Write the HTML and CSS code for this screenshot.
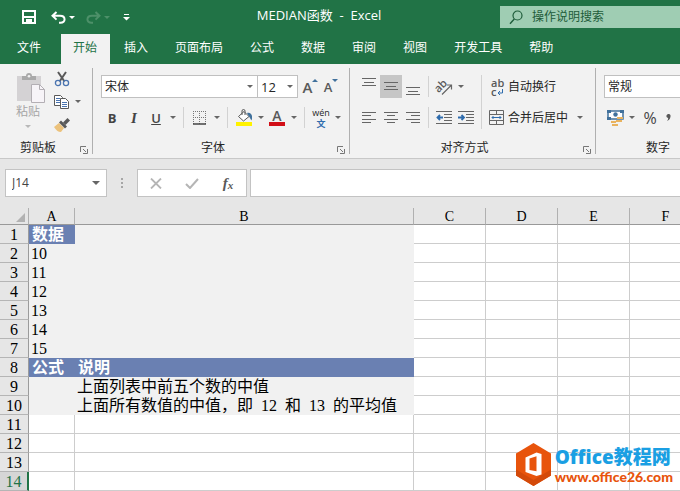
FILE: index.html
```html
<!DOCTYPE html>
<html lang="zh-CN">
<head>
  <meta charset="UTF-8" />
  <title>MEDIAN函数 - Excel</title>
  <link rel="stylesheet" href="styles.css">
</head>
<body>
  <header class="titlebar">
    <div class="quick-access">
      <button class="save" aria-label="保存">
        <svg width="14" height="14" viewBox="0 0 14 14"><path d="M0 0h14v14H0zM2 2v4h10V2zM2 8v4h2V9h6v3h2V8z" fill="#fff" fill-rule="evenodd"/><path d="M5 10.500h2V13H5z" fill="#fff"/></svg>
      </button>
      <button class="undo" aria-label="撤消">
        <svg width="15" height="13" viewBox="0 0 15 13"><path d="M5.500 1L1.500 4.800l4 3.800M2 4.800h7c6 0 6 7 .5 7H8" fill="none" stroke="#fff" stroke-width="2"/></svg>
      </button>
      <button class="drop light" aria-label="撤消选项"></button>
      <button class="redo" aria-label="恢复">
        <svg width="15" height="13" viewBox="0 0 15 13"><path d="M9.500 1l4 3.800-4 3.800M13 4.800H6c-6 0-6 7-.5 7H7" fill="none" stroke="#4d9069" stroke-width="2"/></svg>
      </button>
      <button class="drop dim" aria-label="恢复选项"></button>
      <button class="customize" aria-label="自定义快速访问工具栏">
        <svg width="7" height="7" viewBox="0 0 7 7"><path d="M1 0h5v1H1zM0 3h7L3.500 6.500z" fill="#fff"/></svg>
      </button>
    </div>
    <div class="doc-title">MEDIAN函数&nbsp; - &nbsp;Excel</div>
    <label class="search">
      <svg width="14" height="15" viewBox="0 0 14 15"><circle cx="8.500" cy="5.500" r="4.500" fill="none" stroke="#1e5c3a" stroke-width="1.200"/><path d="M5.300 9L1 13.800" stroke="#1e5c3a" stroke-width="1.400"/></svg>
      <input type="text" placeholder="操作说明搜索" aria-label="操作说明搜索">
    </label>
  </header>

  <nav class="tabs">
    <button class="tab file">文件</button>
    <button class="tab active">开始</button>
    <button class="tab">插入</button>
    <button class="tab">页面布局</button>
    <button class="tab">公式</button>
    <button class="tab">数据</button>
    <button class="tab">审阅</button>
    <button class="tab">视图</button>
    <button class="tab">开发工具</button>
    <button class="tab">帮助</button>
  </nav>

  <div class="ribbon">
    <section class="group clipboard">
      <div class="group-body">
        <button class="paste" disabled>
          <svg width="28" height="30" viewBox="0 0 28 30"><path d="M0 3h24v25H0z" fill="#d4d2d4"/><path d="M5 3h4a3 3 0 0 1 6 0h4v4H5z" fill="#a9a9a9"/><circle cx="12" cy="3.300" r="1.300" fill="#f2f2f2"/><path d="M14.500 11.500h8l5 5v13h-13z" fill="#f7f4f8" stroke="#b3afb4"/><path d="M22.500 11.500v5h5" fill="none" stroke="#b3afb4"/></svg>
          <span>粘贴</span>
          <i class="arrow"></i>
        </button>
        <div class="clip-tools">
          <button class="tool" aria-label="剪切">
            <svg width="16" height="16" viewBox="0 0 16 16"><path d="M4 1l6.500 9.500M12 1L5.500 10.500" stroke="#595959" stroke-width="2" fill="none"/><circle cx="4" cy="12" r="2.600" fill="none" stroke="#4a74b0" stroke-width="1.300"/><circle cx="12" cy="12" r="2.600" fill="none" stroke="#4a74b0" stroke-width="1.300"/></svg>
          </button>
          <div class="row">
            <button class="tool" aria-label="复制">
              <svg width="16" height="16" viewBox="0 0 16 16"><path d="M.5 1.500h6l2 2v8h-8z" fill="#fff" stroke="#595959"/><path d="M2 4.500h4M2 6.500h4M2 8.500h4" stroke="#4a74b0"/><path d="M6.500 4.500h5l3 3v7h-8z" fill="#fff" stroke="#595959"/><path d="M8 8.500h5M8 10.500h5M8 12.500h5" stroke="#4a74b0"/></svg>
            </button>
            <button class="drop" aria-label="复制选项"></button>
          </div>
          <button class="tool" aria-label="格式刷">
            <svg width="16" height="16" viewBox="0 0 16 16"><path d="M5 6l5 5-3 4c-3 0-5-2-7-5z" fill="#ecc27c"/><path d="M5 5.500l2-2 6 6-2 2z" fill="#595959"/><path d="M9 5.500L13.500 1l2.500 2.500L11.500 8z" fill="#595959"/></svg>
          </button>
        </div>
      </div>
      <footer><span>剪贴板</span>
        <button class="launcher" aria-label="剪贴板设置"><svg width="8" height="8" viewBox="0 0 8 8"><path d="M.5 6V.5H6M3 3l3 3M7.500 3v4.500H3" fill="none" stroke="#777"/></svg></button>
      </footer>
    </section>

    <section class="group font">
      <div class="group-body rows">
        <div class="row">
          <div class="combo family"><select aria-label="字体"><option>宋体</option></select></div>
          <div class="combo size"><select aria-label="字号"><option>12</option></select></div>
          <button class="tool grow" aria-label="增大字号">A<i class="up"></i></button>
          <button class="tool shrink" aria-label="减小字号">A<i class="down"></i></button>
        </div>
        <div class="row">
          <button class="tool letter bold">B</button>
          <button class="tool letter italic">I</button>
          <button class="tool letter underline">U</button>
          <button class="drop" aria-label="下划线选项"></button>
          <span class="sep"></span>
          <button class="tool" aria-label="边框">
            <svg width="14" height="14" viewBox="0 0 14 14"><path d="M0 .5h13M0 6.500h13M.5 0v13M6.500 0v13M12.500 0v13" stroke="#777" stroke-dasharray="1 1"/><path d="M0 13h13" stroke="#444" stroke-width="1.500"/></svg>
          </button>
          <button class="drop" aria-label="边框选项"></button>
          <span class="sep"></span>
          <button class="tool" aria-label="填充颜色">
            <svg width="16" height="17" viewBox="0 0 16 17"><path d="M0 13h16v4H0z" fill="#fff200"/><path d="M2.500 7.500L8 2.500l5 5-5.500 4.500z" fill="#fff" stroke="#595959"/><path d="M6 6V2a1.500 1.500 0 0 1 3 0v4" fill="none" stroke="#595959"/><path d="M11 4c5-1 6 4 4.500 7.500-1-1-1.500-3-2.500-4z" fill="#41719c"/></svg>
          </button>
          <button class="drop" aria-label="填充颜色选项"></button>
          <button class="tool font-color" aria-label="字体颜色">A</button>
          <button class="drop" aria-label="字体颜色选项"></button>
          <span class="sep"></span>
          <button class="tool phonetic" aria-label="拼音指南"><span>wén</span><b>文</b></button>
          <button class="drop" aria-label="拼音选项"></button>
        </div>
      </div>
      <footer><span>字体</span>
        <button class="launcher" aria-label="字体设置"><svg width="8" height="8" viewBox="0 0 8 8"><path d="M.5 6V.5H6M3 3l3 3M7.500 3v4.500H3" fill="none" stroke="#777"/></svg></button>
      </footer>
    </section>

    <section class="group align">
      <div class="group-body">
        <div class="rows">
          <div class="row">
            <button class="tool" aria-label="顶端对齐"><svg width="14" height="18" viewBox="0 0 14 18"><path d="M0 .5h14M2 4.500h10M0 7.500h14" stroke="#666"/></svg></button>
            <button class="tool selected" aria-label="垂直居中"><svg width="14" height="18" viewBox="0 0 14 18"><path d="M0 4.500h14M2 8.500h10M0 11.500h14" stroke="#666"/></svg></button>
            <button class="tool" aria-label="底端对齐"><svg width="14" height="18" viewBox="0 0 14 18"><path d="M0 9.500h14M2 13.500h10M0 16.500h14" stroke="#666"/></svg></button>
            <span class="sep"></span>
            <button class="tool" aria-label="方向"><svg width="20" height="20" viewBox="0 0 20 20"><text x="1" y="12" font-size="11" class="glyph" transform="rotate(-45 8 10)">ab</text><path d="M8 17.500L17 8.500M13 8h4.500v4.500" fill="none" stroke="#666" stroke-width="1.200"/></svg></button>
            <button class="drop" aria-label="方向选项"></button>
          </div>
          <div class="row">
            <button class="tool" aria-label="左对齐"><svg width="14" height="12" viewBox="0 0 14 12"><path d="M0 .5h14M0 3.500h9M0 7.500h14M0 10.500h9" stroke="#666"/></svg></button>
            <button class="tool" aria-label="居中"><svg width="14" height="12" viewBox="0 0 14 12"><path d="M0 .5h14M3 3.500h8M0 7.500h14M3 10.500h8" stroke="#666"/></svg></button>
            <button class="tool" aria-label="右对齐"><svg width="14" height="12" viewBox="0 0 14 12"><path d="M0 .5h14M5 3.500h9M0 7.500h14M5 10.500h9" stroke="#666"/></svg></button>
            <span class="sep"></span>
            <button class="tool" aria-label="减少缩进量"><svg width="16" height="13" viewBox="0 0 16 13"><path d="M0 .5h16M8 3.500h8M8 6.500h8M8 9.500h8M0 12.500h16" stroke="#666"/><path d="M7 6.500H2M4 4L1.500 6.500 4 9" fill="none" stroke="#2f6cad" stroke-width="1.800"/></svg></button>
            <button class="tool" aria-label="增加缩进量"><svg width="16" height="13" viewBox="0 0 16 13"><path d="M0 .5h16M8 3.500h8M8 6.500h8M8 9.500h8M0 12.500h16" stroke="#666"/><path d="M0 6.500h5M3.500 4L6 6.500 3.500 9" fill="none" stroke="#2f6cad" stroke-width="1.800"/></svg></button>
          </div>
        </div>
        <span class="sep tall"></span>
        <div class="rows">
          <div class="row">
            <button class="wide"><span class="wrap-icon"><span>ab</span><span>c<svg width="6" height="7" viewBox="0 0 6 7"><path d="M5.500 0v4H1M3 2L1 4l2 2" fill="none" stroke="#2f6cad"/></svg></span></span>自动换行</button>
          </div>
          <div class="row">
            <button class="wide"><svg width="16" height="16" viewBox="0 0 16 16"><path d="M.5 .5h14v14H.5zM.5 4.500h14M.5 10.500h14M7.500 0v4.500M7.500 10.500V15" fill="none" stroke="#666"/><path d="M3 7.500h9M4.500 6L3 7.500 4.500 9M10.500 6L12 7.500 10.500 9" fill="none" stroke="#2f6cad"/></svg>合并后居中</button>
            <button class="drop merge" aria-label="合并选项"></button>
          </div>
        </div>
      </div>
      <footer><span>对齐方式</span>
        <button class="launcher" aria-label="对齐设置"><svg width="8" height="8" viewBox="0 0 8 8"><path d="M.5 6V.5H6M3 3l3 3M7.500 3v4.500H3" fill="none" stroke="#777"/></svg></button>
      </footer>
    </section>

    <section class="group number">
      <div class="group-body rows">
        <div class="row">
          <div class="combo format"><select aria-label="数字格式"><option>常规</option></select></div>
        </div>
        <div class="row">
          <button class="tool" aria-label="会计数字格式"><svg width="17" height="17" viewBox="0 0 17 17"><path d="M1 2h15v8H1z" fill="#fff" stroke="#41719c" stroke-width="1.500"/><path d="M0 1h4v3H0zM13 1h4v3h-4zM0 8h4v3H0z" fill="#41719c"/><circle cx="8.500" cy="5.500" r="2.200" fill="#41719c"/><path d="M10 8h6v2h-6zM9 11h6v2H9zM4 12h5v2H4zM5 15h6v2H5z" fill="#e9b35f"/></svg></button>
          <button class="drop" aria-label="货币选项"></button>
          <button class="tool symbol" aria-label="百分比样式">%</button>
          <button class="tool thousands" aria-label="千位分隔样式"><svg width="6" height="12" viewBox="0 0 6 12"><path d="M.5 3.500a2 2 0 1 1 4 1C4.300 7 3 8 1 9c1-1.200 1.300-2 1-3A2 2 0 0 1 .5 3.500z" fill="#595959"/></svg></button>
        </div>
      </div>
      <footer><span>数字</span></footer>
    </section>
  </div>

  <div class="formula-bar">
    <div class="name-box">
      <input type="text" value="J14" aria-label="名称框">
      <button class="drop" aria-label="名称列表"></button>
    </div>
    <i class="grip"></i>
    <div class="formula-tools">
      <button aria-label="取消"><svg width="12" height="11" viewBox="0 0 12 11"><path d="M1 .5l10 10M11 .5L1 10.500" stroke="#b5b5b5" stroke-width="1.800"/></svg></button>
      <button aria-label="输入"><svg width="14" height="11" viewBox="0 0 14 11"><path d="M1 6l4 4 8-9" fill="none" stroke="#b5b5b5" stroke-width="2"/></svg></button>
      <button class="fx" aria-label="插入函数">f<sub>x</sub></button>
    </div>
    <input class="formula" type="text" aria-label="编辑栏">
  </div>

  <main class="sheet">
    <table class="grid">
      <colgroup>
        <col class="c-head"><col class="c-a"><col class="c-b"><col class="c-std"><col class="c-std"><col class="c-std"><col class="c-std"><col>
      </colgroup>
      <thead>
        <tr><th class="corner"><svg width="9" height="9" viewBox="0 0 9 9"><path d="M9 0v9H0z" fill="#b2b2b2"/></svg></th><th>A</th><th>B</th><th>C</th><th>D</th><th>E</th><th>F</th><th></th></tr>
      </thead>
      <tbody>
        <tr><th>1</th><td class="title">数据</td><td class="fill"></td><td></td><td></td><td></td><td></td><td></td></tr>
        <tr><th>2</th><td class="fill">10</td><td class="fill"></td><td></td><td></td><td></td><td></td><td></td></tr>
        <tr><th>3</th><td class="fill">11</td><td class="fill"></td><td></td><td></td><td></td><td></td><td></td></tr>
        <tr><th>4</th><td class="fill">12</td><td class="fill"></td><td></td><td></td><td></td><td></td><td></td></tr>
        <tr><th>5</th><td class="fill">13</td><td class="fill"></td><td></td><td></td><td></td><td></td><td></td></tr>
        <tr><th>6</th><td class="fill">14</td><td class="fill"></td><td></td><td></td><td></td><td></td><td></td></tr>
        <tr><th>7</th><td class="fill">15</td><td class="fill"></td><td></td><td></td><td></td><td></td><td></td></tr>
        <tr><th>8</th><td class="title">公式</td><td class="title">说明</td><td></td><td></td><td></td><td></td><td></td></tr>
        <tr><th>9</th><td class="fill"></td><td class="fill">上面列表中前五个数的中值</td><td></td><td></td><td></td><td></td><td></td></tr>
        <tr><th>10</th><td class="fill"></td><td class="fill">上面所有数值的中值，即 <span class="num">12</span> 和 <span class="num">13</span> 的平均值</td><td></td><td></td><td></td><td></td><td></td></tr>
        <tr><th>11</th><td></td><td></td><td></td><td></td><td></td><td></td><td></td></tr>
        <tr><th>12</th><td></td><td></td><td></td><td></td><td></td><td></td><td></td></tr>
        <tr><th>13</th><td></td><td></td><td></td><td></td><td></td><td></td><td></td></tr>
        <tr class="current"><th>14</th><td></td><td></td><td></td><td></td><td></td><td></td><td></td></tr>
      </tbody>
    </table>

    <div class="brand">
      <svg width="35" height="43" viewBox="0 0 35 43"><path d="M17.500 0L35 10.500v22L17.500 43 0 32.500v-22z" fill="#e8540c"/><path d="M0 32.500L17.500 43 35 32.500v-6L17.500 37 0 26.500z" fill="#d34a0a"/><path d="M9.500 14.500L20.500 9.500l5 1.500v20.500l-5 1.500-11-4zM13.500 15.500v11.500l7 1.200V13.200z" fill="#fff" fill-rule="evenodd"/></svg>
      <div class="brand-text">
        <strong>Office教程网</strong>
        <span>www.office26.com</span>
      </div>
    </div>
  </main>
</body>
</html>
```

FILE: styles.css
```css
html, body {
  height: 100%;
  margin: 0;
}
body {
  display: flex;
  flex-direction: column;
  overflow: hidden;
  font-family: "Open Sans", "Noto Sans CJK SC", sans-serif;
  font-size: 12px;
  line-height: 16px;
  color: #262626;
  background: #fff;
}
button, input, select {
  font: inherit;
  color: inherit;
  margin: 0;
  padding: 0;
  border: 0;
  background: none;
  box-sizing: border-box;
}
button {
  display: flex;
  align-items: center;
  justify-content: center;
  flex: none;
}
svg {
  display: block;
  flex: none;
}
.glyph {
  font-family: "Open Sans", sans-serif;
  font-weight: 600;
  fill: #595959;
}

/* small down arrow used by every split button */
.drop {
  width: 11px;
  height: 22px;
}
.drop::after, .arrow, .combo::after {
  content: "";
  border: 3px solid transparent;
  border-top-color: #666;
  border-bottom: 0;
}
.drop.light::after {
  border-top-color: #fff;
}
.drop.dim::after {
  border-top-color: #4d9069;
}

/* title bar */
.titlebar {
  display: flex;
  align-items: center;
  height: 34px;
  flex: none;
  background: #217346;
  color: #fff;
}
.quick-access {
  display: flex;
  align-items: center;
  width: 138px;
  box-sizing: border-box;
  padding-left: 22px;
}
.save {
  margin-right: 14px;
}
.undo, .redo {
  width: 16px;
}
.redo {
  margin-left: 8px;
}
.customize {
  margin-left: 11px;
}
.doc-title {
  flex: 1;
  text-align: center;
  white-space: nowrap;
  font-size: 13px;
  padding-bottom: 4px;
}
.search {
  display: flex;
  align-items: center;
  gap: 9px;
  width: 180px;
  height: 22px;
  box-sizing: border-box;
  padding-left: 9px;
  background: #9fcdb3;
}
.search input {
  width: 130px;
}
.search input::placeholder {
  color: #1e5c3a;
  opacity: 1;
}

/* tabs */
.tabs {
  display: flex;
  gap: 2px;
  height: 30px;
  flex: none;
  background: #217346;
}
.tab {
  padding: 0 13px 2px 12px;
  color: #fff;
}
.tab.file {
  padding: 0 18px 2px 17px;
}
.tab.active {
  background: #f2f2f2;
  color: #217346;
}

/* ribbon */
.ribbon {
  display: flex;
  height: 94px;
  flex: none;
  overflow: hidden;
  background: #f2f2f2;
  border-bottom: 1px solid #c8c8c8;
}
.group {
  display: flex;
  flex-direction: column;
  flex: none;
  box-sizing: border-box;
  margin: 4px 0;
  padding: 7px 0 0 8px;
  border-right: 1px solid #b0b0b0;
}
.group-body {
  display: flex;
  flex: 1;
}
.rows {
  display: flex;
  flex-direction: column;
  gap: 8px;
}
.row {
  display: flex;
  align-items: center;
  height: 23px;
}
.group footer {
  display: flex;
  align-items: center;
  height: 12px;
  margin-left: -8px;
  padding-right: 4px;
}
.group footer span {
  flex: 1;
  text-align: center;
}
.launcher {
  align-self: flex-end;
  margin-left: 4px;
}
.tool {
  width: 22px;
  height: 23px;
}
.tool.selected {
  background: #c6c6c6;
}
.sep {
  width: 1px;
  height: 21px;
  margin: 0 5px;
  background: #d2d2d2;
}
.sep.tall {
  height: 54px;
}
.clipboard {
  width: 93px;
  padding-top: 3px;
}
.clipboard .group-body {
  gap: 6px;
}
.paste {
  flex-direction: column;
  justify-content: flex-start;
  width: 40px;
  color: #a6a6a6;
  padding-top: 2px;
}
.paste svg {
  margin-left: 5px;
  margin-bottom: 1px;
}
.arrow {
  margin-top: 5px;
  border-top-color: #b8b8b8;
}
.clip-tools {
  margin-top: -4px;
}
.clip-tools .tool {
  width: 16px;
}
.clip-tools .drop {
  margin-left: 2px;
}
.font {
  width: 257px;
}
.align {
  width: 246px;
}
.align .sep {
  margin: 0 4px;
}
.number {
  width: 129px;
}
.combo {
  position: relative;
  box-sizing: border-box;
  height: 23px;
  background: #fff;
  border: 1px solid #c0c0c0;
}
.combo::after {
  position: absolute;
  right: 4px;
  top: 9px;
  pointer-events: none;
}
.combo select {
  width: 100%;
  height: 21px;
  padding-left: 3px;
  appearance: none;
}
.family {
  width: 157px;
}
.size {
  width: 40px;
  border-left: 0;
}
.size select {
  font-size: 13px;
}
.format {
  width: 112px;
}
.grow, .shrink, .font-color {
  font-weight: 600;
  color: #595959;
}
.grow {
  font-size: 15px;
  padding-left: 3px;
}
.shrink {
  font-size: 13px;
}
.up, .down {
  align-self: flex-start;
  margin-top: 4px;
  border: 3px solid transparent;
}
.up {
  border-top: 0;
  border-bottom-color: #41719c;
}
.down {
  border-bottom: 0;
  border-top-color: #41719c;
}
.font-color {
  font-size: 14px;
  line-height: 14px;
  width: 16px;
  height: 17px;
  margin: 0 3px;
  border-bottom: 4px solid #d20f17;
}
.letter {
  font-size: 13px;
  color: #444;
  font-weight: 700;
}
.italic {
  font-family: "Liberation Serif", serif;
  font-style: italic;
  font-size: 15px;
}
.underline {
  text-decoration: underline;
  font-weight: 600;
}
.phonetic {
  flex-direction: column;
  line-height: 11px;
  font-size: 9px;
}
.phonetic b {
  color: #2f6cad;
}
.symbol {
  font-size: 16px;
  color: #444;
}
.number .symbol {
  margin-left: 2px;
}
.thousands {
  width: 16px;
}
.wide {
  gap: 3px;
  padding-left: 3px;
}
.wrap-icon {
  display: flex;
  flex-direction: column;
  width: 14px;
  padding-left: 2px;
  font-size: 11px;
  line-height: 9px;
  font-weight: 600;
  color: #595959;
  text-align: left;
}
.wrap-icon svg {
  display: inline-block;
  margin-left: 1px;
}
.merge {
  margin-left: 6px;
}

/* formula bar */
.formula-bar {
  display: flex;
  height: 28px;
  flex: none;
  padding: 10px 0 11px 5px;
  background: #e6e6e6;
}
.name-box, .formula-tools, .formula {
  display: flex;
  box-sizing: border-box;
  background: #fff;
  border: 1px solid #c3c3c3;
}
.name-box {
  width: 102px;
  align-items: center;
  padding: 0 5px 0 6px;
  color: #444;
}
.name-box input {
  flex: 1;
  min-width: 0;
}
.name-box .drop::after {
  border-width: 4px 4px 0;
}
.grip {
  align-self: center;
  width: 2px;
  height: 10px;
  margin: 0 14px;
  background: repeating-linear-gradient(#a6a6a6 0 2px, transparent 2px 4px);
}
.formula-tools {
  width: 110px;
}
.formula-tools button {
  width: 36px;
}
.formula-tools .fx {
  display: block;
  font-family: "Liberation Serif", serif;
  font-style: italic;
  font-weight: 700;
  font-size: 15px;
  color: #595959;
}
.fx sub {
  font-size: 11px;
  line-height: 1px;
  vertical-align: -1px;
}
.formula {
  flex: 1;
  margin-left: 3px;
  padding: 0 6px;
  border-right: 0;
}

/* worksheet */
.sheet {
  position: relative;
  flex: 1;
  overflow: hidden;
}
.grid {
  width: 100%;
  table-layout: fixed;
  border-collapse: separate;
  border-spacing: 0;
  font-family: "Liberation Serif", "Noto Sans CJK SC", serif;
  font-size: 16px;
  line-height: 16px;
  color: #000;
}
.c-head {
  width: 29px;
}
.c-a {
  width: 46px;
}
.c-b {
  width: 339px;
}
.c-std {
  width: 72px;
}
.grid th, .grid td {
  height: 16px;
  padding: 2px 0 0;
  border-right: 1px solid #cdcdcd;
  border-bottom: 1px solid #cdcdcd;
  white-space: nowrap;
}
.grid th {
  background: #e6e6e6;
  font-weight: 400;
  border-right-color: #9b9b9b;
  border-bottom-color: #b5b5b5;
}
.grid thead th {
  height: 14px;
  font-size: 14px;
  line-height: 14px;
  border-right-color: #b0b0b0;
  border-bottom-color: #999;
}
.corner svg {
  margin-left: 16px;
}
.grid td {
  padding-left: 2px;
}
.grid td.fill {
  background: #f1f1f1;
  border-color: #f1f1f1;
}
.grid td.title {
  background: #6a80b2;
  border-color: #6a80b2;
  color: #fff;
  font-weight: 700;
  padding-left: 3px;
}
.grid .num {
  padding: 0 4px;
}
.grid .current th {
  background: #d6d6d6;
  color: #217346;
  border-right: 2px solid #217346;
}

/* site mark over the lower right corner */
.brand {
  position: absolute;
  right: 7px;
  bottom: 5px;
  display: flex;
  align-items: center;
  gap: 4px;
}
.brand-text {
  display: flex;
  flex-direction: column;
  font-weight: 700;
}
.brand strong {
  font-size: 19px;
  line-height: 24px;
  color: #1a9fe3;
}
.brand span {
  font-family: Lato, sans-serif;
  font-size: 14px;
  font-weight: 900;
  line-height: 16px;
  color: #e8540c;
}
```
